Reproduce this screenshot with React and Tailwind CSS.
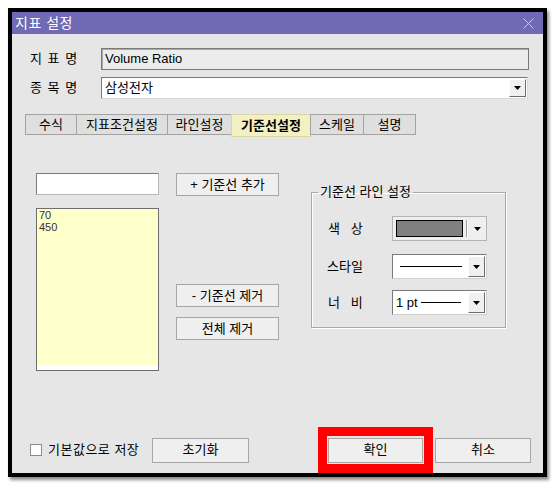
import React from 'react';

function Arrow() {
  return (
    <svg width="7" height="4" viewBox="0 0 7 4">
      <polygon points="0,0 7,0 3.5,4" fill="#000" />
    </svg>
  );
}

function DropBtn({ className = '' }) {
  return (
    <div className={`flex items-center justify-center w-[17px] bg-[#f0f0f0] border border-t-white border-l-white border-r-[#6a6a6a] border-b-[#6a6a6a] ${className}`}>
      <Arrow />
    </div>
  );
}

function Btn({ children, className = '' }) {
  return (
    <button className={`flex items-center justify-center border border-[#a6a6a6] bg-[#efefef] text-[13px] text-black ${className}`}>
      {children}
    </button>
  );
}

export default function App() {
  const tabs = [
    { label: '수식', w: 'w-[52px]' },
    { label: '지표조건설정', w: 'w-[92px]' },
    { label: '라인설정', w: 'w-[65px]' },
    { label: '기준선설정', w: 'w-[80px]', active: true },
    { label: '스케일', w: 'w-[54px]' },
    { label: '설명', w: 'w-[53px]' },
  ];

  return (
    <div className="w-[553px] h-[483px] bg-white pt-[8px] pl-[8px] font-['Liberation_Sans','Noto_Sans_CJK_KR',sans-serif] text-black">
      <div className="w-[539px] h-[469px] border-4 border-black flex flex-col shadow-[2px_3px_3px_rgba(0,0,0,0.45)]">
        {/* Title bar */}
        <div className="h-[22px] bg-[#7069b3] flex items-center justify-between pl-[3px] pr-[9px]">
          <span className="text-white text-[14px] leading-none tracking-[0.5px]">지표 설정</span>
          <svg width="11" height="11" viewBox="0 0 11 11">
            <path d="M0.5 0.5 L10.5 10.5 M10.5 0.5 L0.5 10.5" stroke="#c9c6e8" strokeWidth="1" />
          </svg>
        </div>

        {/* Body */}
        <div className="flex-1 bg-[#e6e6e6] flex flex-col">
          <div className="flex items-center mt-[14px] h-[22px]">
            <div className="w-[89px] pl-[18px] text-[13px] tracking-[1px]">지 표 명</div>
            <div className="w-[428px] h-[22px] bg-[#ececec] border border-[#7a7a7a] shadow-[inset_1px_1px_0_#a8a8a8] flex items-center pl-[3px] text-[13px]">
              Volume Ratio
            </div>
          </div>
          <div className="flex items-center mt-[7px] h-[22px]">
            <div className="w-[89px] pl-[18px] text-[13px] tracking-[1px]">종 목 명</div>
            <div className="w-[427px] h-[22px] bg-white border border-[#7a7a7a] border-r-[#d8d8d8] border-b-[#d8d8d8] flex items-center justify-between pl-[3px] pr-[1px] text-[13px]">
              <span>삼성전자</span>
              <DropBtn className="h-[18px]" />
            </div>
          </div>

          {/* Tabs */}
          <div className="flex items-start mt-[15px] ml-[13px] h-[21px]">
            {tabs.map((t, i) => (
              <div
                key={t.label}
                className={`${t.w} flex items-center justify-center text-[13px] border ${i > 0 ? '-ml-px' : ''} ${
                  t.active
                    ? 'h-[23px] bg-[#f3f1c3] border-[#d9d6a4] font-bold'
                    : 'h-[21px] bg-[#dfdfdf] border-[#a3a3a3]'
                }`}
              >
                {t.label}
              </div>
            ))}
          </div>

          {/* Panel */}
          <div className="flex items-start ml-[24px]">
            <div className="w-[123px] flex flex-col">
              <div className="mt-[38px] h-[22px] bg-white border border-[#7a7a7a] border-r-[#b8b8b8] border-b-[#b8b8b8]" />
              <div className="mt-[13px] h-[163px] border border-[#6e6e6e] flex flex-col">
                <div className="flex-1 bg-[#ffffcc] pl-[2px] font-['Liberation_Sans',sans-serif] text-[11px] leading-[12px] text-[#333]">
                  <div>70</div>
                  <div>450</div>
                </div>
                <div className="h-[4px] bg-white" />
              </div>
            </div>

            <div className="ml-[17px] w-[103px] flex flex-col">
              <Btn className="mt-[38px] h-[23px]">+ 기준선 추가</Btn>
              <Btn className="mt-[88px] h-[23px]">- 기준선 제거</Btn>
              <Btn className="mt-[10px] h-[23px]">전체 제거</Btn>
            </div>

            <fieldset className="ml-[32px] mt-[49px] w-[195px] h-[144px] border border-[#a9a9a9] shadow-[inset_1px_1px_0_#fff,1px_1px_0_#fff]">
              <legend className="ml-[6px] px-[2px] text-[13px] leading-[16px]">기준선 라인 설정</legend>
              <div className="flex flex-col pl-[15px] pt-[16px]">
                <div className="flex items-center h-[25px]">
                  <div className="w-[65px] text-[13px] pl-[1px]">색&nbsp;&nbsp;&nbsp;상</div>
                  <div className="w-[95px] h-[25px] bg-[#efefef] border border-[#b4b4b4] flex items-center pl-[3px]">
                    <div className="w-[67px] h-[17px] bg-[#808080] border border-black" />
                    <div className="ml-[3px] w-[2px] h-[17px] border-l border-[#9a9a9a] bg-white" />
                    <div className="flex-1 flex justify-center">
                      <Arrow />
                    </div>
                  </div>
                </div>
                <div className="flex items-center h-[25px] mt-[13px]">
                  <div className="w-[65px] text-[13px]">스타일</div>
                  <div className="w-[95px] h-[25px] bg-white border border-[#7a7a7a] border-r-[#d0d0d0] border-b-[#d0d0d0] flex items-center pl-[7px] pr-[1px]">
                    <div className="w-[62px] h-px bg-black" />
                    <div className="flex-1" />
                    <DropBtn className="h-[21px]" />
                  </div>
                </div>
                <div className="flex items-center h-[25px] mt-[11px]">
                  <div className="w-[65px] text-[13px] pl-[1px]">너&nbsp;&nbsp;&nbsp;비</div>
                  <div className="w-[95px] h-[25px] bg-white border border-[#7a7a7a] border-r-[#d0d0d0] border-b-[#d0d0d0] flex items-center pl-[3px] pr-[1px]">
                    <span className="text-[13px]">1 pt</span>
                    <div className="ml-[3px] w-[40px] h-px bg-black" />
                    <div className="flex-1" />
                    <DropBtn className="h-[21px]" />
                  </div>
                </div>
              </div>
            </fieldset>
          </div>

          {/* Bottom row */}
          <div className="mt-auto h-[46px] flex items-center pl-[18px]">
            <div className="w-[12px] h-[12px] bg-white border border-[#8a8a8a]" />
            <span className="ml-[6px] w-[96px] text-[13px] tracking-[0.5px] whitespace-nowrap">기본값으로 저장</span>
            <Btn className="ml-[8px] w-[97px] h-[25px]">초기화</Btn>
            <div className="ml-[69px] w-[115px] h-[46px] border-[9px] border-[#ff0000] flex items-center justify-center">
              <Btn className="w-[95px] h-[25px]">확인</Btn>
            </div>
            <Btn className="ml-[2px] w-[96px] h-[25px]">취소</Btn>
          </div>
        </div>
      </div>
    </div>
  );
}
